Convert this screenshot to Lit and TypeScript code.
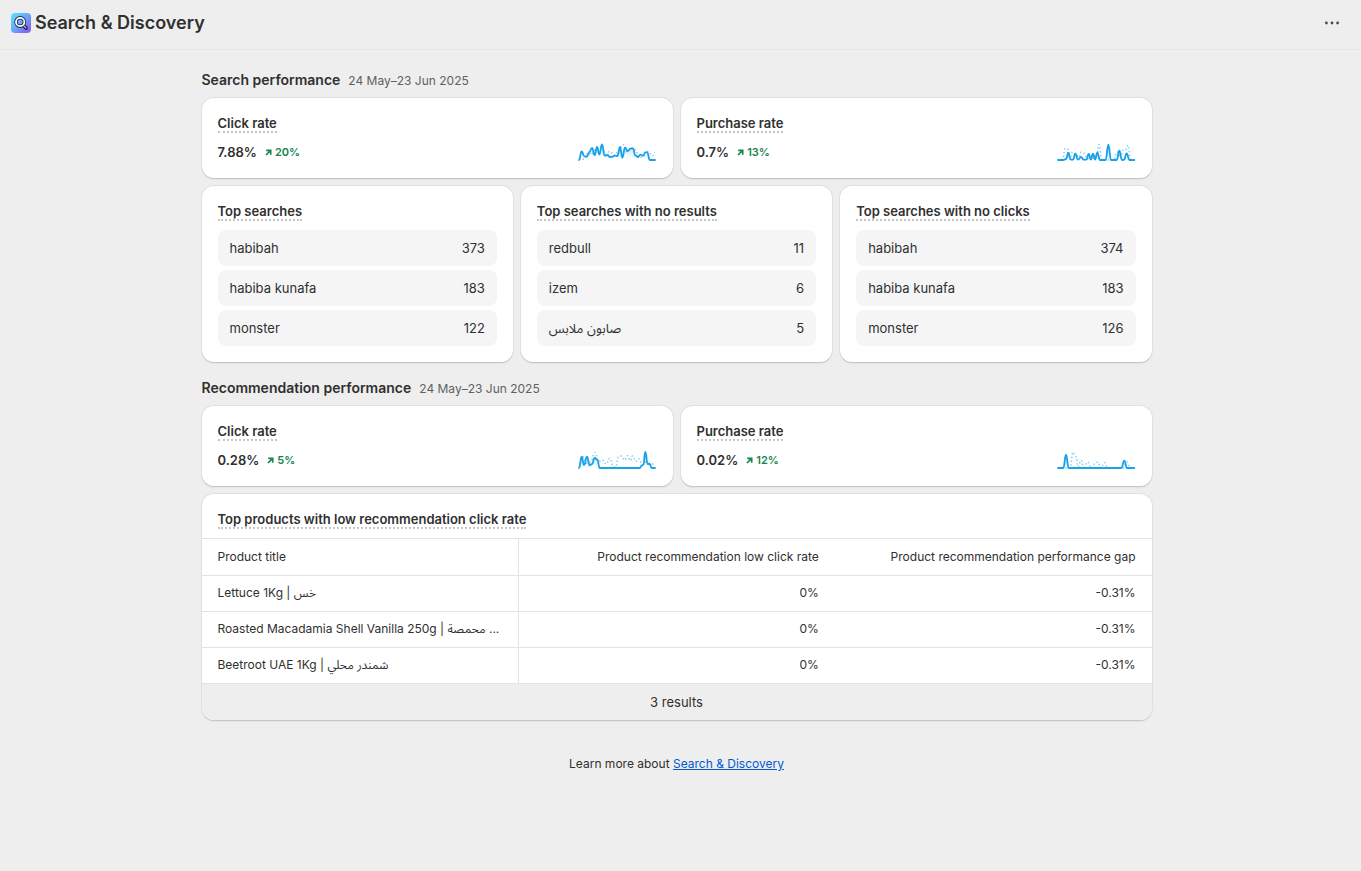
import { LitElement, html, css, svg } from "lit";
import { customElement, property } from "lit/decorators.js";

type Point = [number, number];

interface Metric {
  title: string;
  value: string;
  change: string;
  current: Point[];
  previous: Point[];
}

interface SearchList {
  title: string;
  rows: [string, string][];
}

const PERIOD = "24 May–23 Jun 2025";

/* Sparkline points live on a 240 x 60 grid with the baseline at y = 54. */
const SEARCH_METRICS: Metric[] = [
  {
    title: "Click rate",
    value: "7.88%",
    change: "20%",
    current: [[6, 54], [14, 28], [22, 43], [30, 43], [37, 30], [45, 18], [53, 39], [60, 15], [67, 37], [75, 7], [83, 41], [91, 39], [99, 45], [106, 44], [114, 41], [121, 42], [129, 15], [136, 47], [144, 17], [152, 27], [160, 20], [168, 19], [175, 40], [183, 45], [190, 38], [198, 41], [205, 31], [211, 31], [218, 54], [234, 54]],
    previous: [[6, 50], [22, 52], [34, 32], [44, 38], [53, 25], [66, 22], [76, 12], [86, 42], [99, 28], [112, 40], [124, 30], [138, 8], [150, 30], [164, 19], [176, 24], [186, 47], [198, 45], [208, 26], [218, 34], [226, 42], [234, 32]],
  },
  {
    title: "Purchase rate",
    value: "0.7%",
    change: "13%",
    current: [[6, 54], [22, 54], [30, 51], [37, 32], [44, 53], [51, 53], [58, 35], [66, 53], [75, 45], [83, 53], [91, 53], [98, 36], [105, 53], [111, 35], [117, 53], [124, 32], [132, 54], [149, 54], [157, 8], [165, 54], [182, 54], [190, 26], [198, 54], [204, 53], [212, 34], [220, 54], [235, 54]],
    previous: [[6, 54], [20, 52], [27, 20], [36, 22], [42, 48], [50, 30], [60, 36], [68, 46], [76, 30], [84, 34], [94, 50], [106, 43], [116, 42], [121, 45], [129, 8], [138, 54], [172, 54], [184, 30], [194, 42], [202, 24], [211, 22], [216, 10], [224, 54], [235, 54]],
  },
];

const RECOMMENDATION_METRICS: Metric[] = [
  {
    title: "Click rate",
    value: "0.28%",
    change: "5%",
    current: [[6, 54], [14, 20], [21, 45], [30, 20], [38, 46], [45, 42], [53, 24], [61, 29], [68, 54], [188, 54], [195, 46], [199, 44], [205, 6], [212, 42], [218, 42], [224, 54], [234, 54]],
    previous: [[6, 50], [18, 20], [28, 40], [40, 36], [54, 8], [64, 34], [76, 30], [88, 42], [98, 25], [108, 46], [116, 52], [124, 22], [134, 18], [142, 30], [152, 17], [160, 32], [167, 18], [176, 34], [186, 26], [196, 44], [206, 36], [218, 40], [228, 42], [234, 38]],
  },
  {
    title: "Purchase rate",
    value: "0.02%",
    change: "12%",
    current: [[6, 54], [22, 54], [30, 14], [38, 54], [196, 54], [205, 32], [213, 54], [235, 54]],
    previous: [[6, 54], [42, 54], [51, 7], [60, 20], [66, 50], [76, 31], [84, 52], [94, 36], [106, 54], [118, 40], [126, 36], [134, 54], [146, 38], [156, 54], [202, 54], [214, 36], [222, 54], [235, 54]],
  },
];

const SEARCH_LISTS: SearchList[] = [
  { title: "Top searches", rows: [["habibah", "373"], ["habiba kunafa", "183"], ["monster", "122"]] },
  { title: "Top searches with no results", rows: [["redbull", "11"], ["izem", "6"], ["صابون ملابس", "5"]] },
  { title: "Top searches with no clicks", rows: [["habibah", "374"], ["habiba kunafa", "183"], ["monster", "126"]] },
];

const PRODUCTS: [string, string, string][] = [
  ["Lettuce 1Kg | خس", "0%", "-0.31%"],
  ["Roasted Macadamia Shell Vanilla 250g | محمصة ...", "0%", "-0.31%"],
  ["Beetroot UAE 1Kg | شمندر محلي", "0%", "-0.31%"],
];

function smoothPath(points: Point[]): string {
  return points
    .map(([x, y], i) => {
      if (i === 0) return `M${x} ${y}`;
      const [px, py] = points[i - 1];
      const mid = (px + x) / 2;
      return `C${mid} ${py} ${mid} ${y} ${x} ${y}`;
    })
    .join("");
}

@customElement("spark-line")
class SparkLine extends LitElement {
  @property({ attribute: false }) current: Point[] = [];
  @property({ attribute: false }) previous: Point[] = [];

  static styles = css`
    :host { display: block; width: 80px; height: 20px; }
    .chart { display: block; width: 100%; height: 100%; overflow: visible; }
    .line { fill: none; stroke: #1ba0ea; stroke-width: 5.5; stroke-linecap: round; stroke-linejoin: round; }
    .past { fill: none; stroke: #7cc8f2; stroke-width: 4.5; stroke-dasharray: 4 7; }
  `;

  render() {
    const path = smoothPath(this.current);
    const last = this.current[this.current.length - 1];
    const first = this.current[0];
    return html`<svg class="chart" viewBox="0 0 240 60" aria-hidden="true">
      ${svg`
        <defs>
          <linearGradient id="fade" x1="0" y1="0" x2="0" y2="1">
            <stop offset="0" stop-color="#1ba0ea" stop-opacity="0.25"></stop>
            <stop offset="1" stop-color="#1ba0ea" stop-opacity="0"></stop>
          </linearGradient>
        </defs>
        <path d="${path}L${last[0]} 54L${first[0]} 54Z" fill="url(#fade)"></path>
        <path class="past" d=${smoothPath(this.previous)}></path>
        <path class="line" d=${path}></path>`}
    </svg>`;
  }
}

@customElement("app-root")
class AppRoot extends LitElement {
  static styles = css`
    :host {
      display: block;
      min-height: 100vh;
      background: #eeeeee;
      color: #303030;
      font-family: Inter, "Noto Sans Arabic", "Noto Sans", sans-serif;
      font-size: 13px;
      line-height: 20px;
    }
    * { box-sizing: border-box; }
    h1, h2, h3, p, ul { margin: 0; padding: 0; }
    .topbar {
      display: flex;
      align-items: center;
      justify-content: space-between;
      height: 50px;
      padding: 0 15px 4px 11px;
      border-bottom: 1px solid #e4e4e4;
    }
    .brand { display: flex; align-items: center; gap: 4px; }
    .logo { display: block; width: 20px; height: 20px; }
    .app-name { font-size: 18px; line-height: 24px; font-weight: 600; }
    .more {
      display: flex;
      align-items: center;
      justify-content: center;
      width: 28px;
      height: 28px;
      padding: 0;
      border: 0;
      border-radius: 8px;
      background: none;
      color: #4a4a4a;
    }
    .content {
      padding: 20px 32px 24px 24px;
    }
    .column {
      display: flex;
      flex-direction: column;
      gap: 16px;
      max-width: 950px;
      margin: 0 auto;
    }
    .section { display: flex; flex-direction: column; gap: 8px; }
    .heading { display: flex; align-items: baseline; gap: 8px; height: 20px; }
    .section-title { font-size: 14px; line-height: 20px; font-weight: 600; }
    .period { font-size: 12px; color: #616161; }
    .pair { display: grid; grid-template-columns: repeat(2, 1fr); gap: 8px; }
    .trio { display: grid; grid-template-columns: repeat(3, 1fr); gap: 8px; }
    .card {
      padding: 16px;
      border-radius: 12px;
      background: #ffffff;
      box-shadow: 0 1px 0 #c6c6c6, 0 0 0 1px #e0e0e0, 0 2px 1px #e4e4e4;
    }
    .card-title { display: flex; height: 20px; font-size: 13px; font-weight: 600; }
    .hint { height: 19px; line-height: 18px; border-bottom: 2px dotted #c4c4c4; }
    .stat { display: flex; align-items: center; height: 20px; margin-top: 8px; gap: 8px; }
    .value { font-weight: 600; }
    .change {
      display: flex;
      align-items: center;
      gap: 3px;
      flex: 1;
      font-size: 11px;
      font-weight: 600;
      color: #14854e;
    }
    .arrow { display: block; width: 7px; height: 7px; }
    .list { display: flex; flex-direction: column; gap: 4px; margin-top: 8px; list-style: none; }
    .item {
      display: flex;
      align-items: center;
      justify-content: space-between;
      height: 36px;
      padding: 0 12px;
      border-radius: 8px;
      background: #f5f5f5;
    }
    .table-card { padding: 0; overflow: hidden; }
    .table-head { padding: 16px 16px 8px; }
    .table { width: 100%; border-collapse: separate; border-spacing: 0; table-layout: fixed; font-size: 12px; }
    .cell {
      height: 36px;
      padding: 0 16px 2px;
      border-top: 1px solid #e3e3e3;
      font-weight: 400;
      text-align: right;
      white-space: nowrap;
      overflow: hidden;
      text-overflow: ellipsis;
    }
    .column-head { height: 37px; padding-bottom: 1px; }
    .first { text-align: left; }
    .divided { border-left: 1px solid #e3e3e3; }
    .results {
      height: 37px;
      border-top: 1px solid #e3e3e3;
      background: #eeeeee;
      line-height: 36px;
      text-align: center;
    }
    .learn { padding-top: 18px; font-size: 12px; text-align: center; }
    .link { color: #005bd3; }
  `;

  private renderMetric(m: Metric) {
    return html`<article class="card">
      <h3 class="card-title"><span class="hint">${m.title}</span></h3>
      <div class="stat">
        <span class="value">${m.value}</span>
        <span class="change">
          <svg class="arrow" viewBox="0 0 7 7" aria-hidden="true">
            <path d="M1 6L5 2M1.2 1.3H5.7V5.8" fill="none" stroke="currentColor" stroke-width="1.7"></path>
          </svg>
          ${m.change}
        </span>
        <spark-line .current=${m.current} .previous=${m.previous}></spark-line>
      </div>
    </article>`;
  }

  private renderList(list: SearchList) {
    return html`<article class="card">
      <h3 class="card-title"><span class="hint">${list.title}</span></h3>
      <ul class="list">
        ${list.rows.map(([term, count]) => html`<li class="item"><span>${term}</span><span>${count}</span></li>`)}
      </ul>
    </article>`;
  }

  private renderHeading(title: string) {
    return html`<div class="heading">
      <h2 class="section-title">${title}</h2>
      <span class="period">${PERIOD}</span>
    </div>`;
  }

  render() {
    return html`
      <header class="topbar">
        <div class="brand">
          <svg class="logo" viewBox="0 0 20 20" aria-hidden="true">
            <defs>
              <linearGradient id="sky" x1="0" y1="0" x2="1" y2="1">
                <stop offset="0" stop-color="#5fe3fb"></stop>
                <stop offset="0.5" stop-color="#6aa5fb"></stop>
                <stop offset="1" stop-color="#8a4df5"></stop>
              </linearGradient>
            </defs>
            <rect width="20" height="20" rx="4" fill="url(#sky)"></rect>
            <path d="M12.2 12.2L15 15" stroke="#1f2540" stroke-width="3.8" stroke-linecap="round"></path>
            <circle cx="9.2" cy="9" r="4.2" fill="none" stroke="#1f2540" stroke-width="3.4"></circle>
            <circle cx="9.2" cy="9" r="4.2" fill="none" stroke="#ffffff" stroke-width="1.8"></circle>
            <path d="M12.6 12.6L14.9 14.9" stroke="#b9bfd0" stroke-width="1.3" stroke-linecap="round"></path>
          </svg>
          <h1 class="app-name">Search &amp; Discovery</h1>
        </div>
        <button class="more" type="button" aria-label="More actions">
          <svg width="16" height="4" viewBox="0 0 16 4" fill="currentColor" aria-hidden="true">
            <circle cx="2.4" cy="2" r="1.4"></circle>
            <circle cx="8" cy="2" r="1.4"></circle>
            <circle cx="13.6" cy="2" r="1.4"></circle>
          </svg>
        </button>
      </header>
      <main class="content">
        <div class="column">
          <section class="section">
            ${this.renderHeading("Search performance")}
            <div class="pair">${SEARCH_METRICS.map((m) => this.renderMetric(m))}</div>
            <div class="trio">${SEARCH_LISTS.map((l) => this.renderList(l))}</div>
          </section>
          <section class="section">
            ${this.renderHeading("Recommendation performance")}
            <div class="pair">${RECOMMENDATION_METRICS.map((m) => this.renderMetric(m))}</div>
            <article class="card table-card">
              <div class="table-head">
                <h3 class="card-title"><span class="hint">Top products with low recommendation click rate</span></h3>
              </div>
              <table class="table">
                <thead>
                  <tr>
                    <th class="cell column-head first" scope="col">Product title</th>
                    <th class="cell column-head divided" scope="col">Product recommendation low click rate</th>
                    <th class="cell column-head" scope="col">Product recommendation performance gap</th>
                  </tr>
                </thead>
                <tbody>
                  ${PRODUCTS.map(
                    ([title, rate, gap]) => html`<tr>
                      <td class="cell first">${title}</td>
                      <td class="cell divided">${rate}</td>
                      <td class="cell">${gap}</td>
                    </tr>`
                  )}
                </tbody>
              </table>
              <p class="results">3 results</p>
            </article>
          </section>
          <p class="learn">Learn more about <a class="link" href="#learn">Search &amp; Discovery</a></p>
        </div>
      </main>
    `;
  }
}
